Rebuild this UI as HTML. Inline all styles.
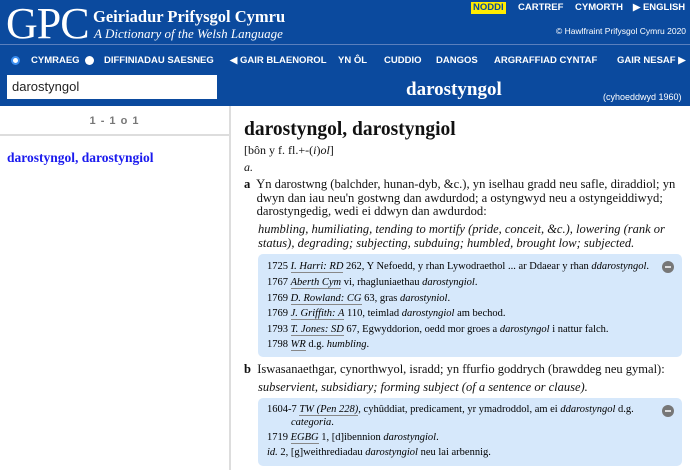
<!DOCTYPE html>
<html><head><meta charset="utf-8"><style>
*{margin:0;padding:0;box-sizing:border-box}
body{width:690px;height:470px;overflow:hidden;background:#fff;font-family:"Liberation Sans",sans-serif;position:relative}
.hd{position:absolute;left:0;top:0;width:690px;height:106px;background:#0b4a9e;color:#fff}
.abs{position:absolute;white-space:nowrap}
.nav{font-size:9.5px;font-weight:bold;color:#fff}
.serif{font-family:"Liberation Serif",serif}
.left{position:absolute;left:0;top:106px;width:231px;height:364px;border-right:2px solid #ddd}
.ct{position:absolute;left:244px;font-family:"Liberation Serif",serif;color:#111}
.box{position:absolute;left:258px;width:424px;background:#d6e8fb;border-radius:5px;font-family:"Liberation Serif",serif;font-size:10.5px}
.box div{position:absolute;left:9px;white-space:nowrap}
.box u{text-decoration:none;border-bottom:1px solid #888;font-style:italic}
.mi{position:absolute;right:8px;width:12px;height:12px;border-radius:50%;background:#777}
.mi:after{content:"";position:absolute;left:3px;top:5px;width:6px;height:2px;background:#ddd}
</style></head><body>
<div class="hd">
<div class="abs serif" style="left:6px;top:-2px;font-size:44px;letter-spacing:-1px">GPC</div>
<div class="abs serif" style="left:93px;top:7px;font-size:16.5px;font-weight:bold">Geiriadur Prifysgol Cymru</div>
<div class="abs serif" style="left:94px;top:26px;font-size:13px;font-style:italic">A Dictionary of the Welsh Language</div>
<div class="abs nav" style="left:471px;top:2px;background:#ffeb00;color:#0b4a9e;padding:0 2px;line-height:12px">NODDI</div>
<div class="abs nav" style="left:518px;top:2px">CARTREF</div>
<div class="abs nav" style="left:575px;top:2px">CYMORTH</div>
<div class="abs nav" style="left:633px;top:2px">▶ ENGLISH</div>
<div class="abs" style="left:556px;top:26px;font-size:8.5px">© Hawlfraint Prifysgol Cymru 2020</div>
<div class="abs" style="left:0;top:44px;width:690px;height:1px;background:#5a7fbd"></div>
<div class="abs" style="left:11px;top:56px;width:9px;height:9px;border-radius:50%;border:2px solid #3b8ef0;background:#fff"></div>
<div class="abs nav" style="left:31px;top:55px">CYMRAEG</div>
<div class="abs" style="left:85px;top:56px;width:9px;height:9px;border-radius:50%;background:#fff"></div>
<div class="abs nav" style="left:104px;top:55px">DIFFINIADAU SAESNEG</div>
<div class="abs nav" style="left:230px;top:55px">◀ GAIR BLAENOROL</div>
<div class="abs nav" style="left:338px;top:55px">YN ÔL</div>
<div class="abs nav" style="left:384px;top:55px">CUDDIO</div>
<div class="abs nav" style="left:436px;top:55px">DANGOS</div>
<div class="abs nav" style="left:494px;top:55px">ARGRAFFIAD CYNTAF</div>
<div class="abs nav" style="left:617px;top:55px">GAIR NESAF ▶</div>
<div class="abs" style="left:7px;top:75px;width:210px;height:24px;background:#fff;color:#222;font-size:13px;padding:4px 5px">darostyngol</div>
<div class="abs serif" style="left:406px;top:79px;font-weight:bold;font-size:19px">darostyngol</div>
<div class="abs" style="left:603px;top:92px;font-size:9px">(cyhoeddwyd 1960)</div>
</div>
<div class="left">
<div class="abs" style="left:0;top:0;width:229px;height:30px;border-bottom:2px solid #ddd;text-align:center;line-height:30px;font-size:11px;font-weight:bold;color:#777;letter-spacing:1px">1 - 1 o 1</div>
<div class="abs serif" style="left:7px;top:44px;font-weight:bold;font-size:13.5px;color:#1a1aee">darostyngol, darostyngiol</div>
</div>
<div class="ct" style="top:119px;font-size:19.5px;font-weight:bold;white-space:nowrap">darostyngol, darostyngiol</div>
<div class="ct" style="top:143px;font-size:12px">[bôn y f. fl.+-(<i>i</i>)<i>ol</i>]</div>
<div class="ct" style="top:160px;font-size:12px"><i>a.</i></div>
<div class="ct" style="top:178px;font-size:12.6px;line-height:13.5px;width:440px;white-space:nowrap"><b>a</b>&nbsp; Yn darostwng (balchder, hunan-dyb, &amp;c.), yn iselhau gradd neu safle, diraddiol; yn<br>&nbsp;&nbsp;&nbsp;&nbsp;dwyn dan iau neu'n gostwng dan awdurdod; a ostyngwyd neu a ostyngeiddiwyd;<br>&nbsp;&nbsp;&nbsp;&nbsp;darostyngedig, wedi ei ddwyn dan awdurdod:</div>
<div class="ct" style="left:258px;top:222px;font-size:12.5px;line-height:14px;font-style:italic;white-space:nowrap">humbling, humiliating, tending to mortify (pride, conceit, &amp;c.), lowering (rank or<br>status), degrading; subjecting, subduing; humbled, brought low; subjected.</div>
<div class="box" style="top:254px;height:103px"><span class="mi" style="top:7px"></span>
<div style="top:7px">1725 <u>I. Harri: RD</u> 262, Y Nefoedd, y rhan Lywodraethol ... ar Ddaear y rhan <i>ddarostyngol</i>.</div>
<div style="top:23px">1767 <u>Aberth Cym</u> vi, rhagluniaethau <i>darostyngiol</i>.</div>
<div style="top:39px">1769 <u>D. Rowland: CG</u> 63, gras <i>darostyniol</i>.</div>
<div style="top:54px">1769 <u>J. Griffith: A</u> 110, teimlad <i>darostyngiol</i> am bechod.</div>
<div style="top:70px">1793 <u>T. Jones: SD</u> 67, Egwyddorion, oedd mor groes a <i>darostyngol</i> i nattur falch.</div>
<div style="top:85px">1798 <u>WR</u> d.g. <i>humbling</i>.</div>
</div>
<div class="ct" style="top:362px;font-size:12.5px;white-space:nowrap"><b>b</b>&nbsp; Iswasanaethgar, cynorthwyol, isradd; yn ffurfio goddrych (brawddeg neu gymal):</div>
<div class="ct" style="left:258px;top:380px;font-size:12.5px;font-style:italic;white-space:nowrap">subservient, subsidiary; forming subject (of a sentence or clause).</div>
<div class="box" style="top:398px;height:68px"><span class="mi" style="top:7px"></span>
<div style="top:6px">1604-7 <u>TW (Pen 228)</u>, cyhûddiat, predicament, yr ymadroddol, am ei <i>ddarostyngol</i> d.g.</div>
<div style="top:19px;left:33px"><i>categoria</i>.</div>
<div style="top:34px">1719 <u>EGBG</u> 1, [d]ibennion <i>darostyngiol</i>.</div>
<div style="top:49px"><i>id.</i> 2, [g]weithrediadau <i>darostyngiol</i> neu lai arbennig.</div>
</div>
</body></html>
